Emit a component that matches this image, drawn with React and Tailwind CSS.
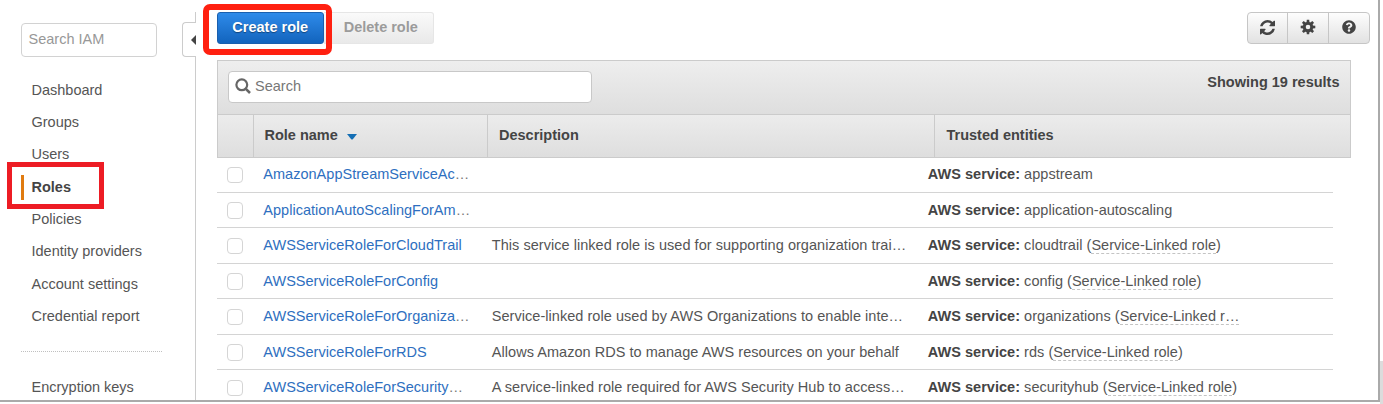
import React from "react";
import { FaQuestionCircle } from "react-icons/fa";

const NAV = [
  "Dashboard",
  "Groups",
  "Users",
  "Roles",
  "Policies",
  "Identity providers",
  "Account settings",
  "Credential report",
];

const ROLES = [
  { name: "AmazonAppStreamServiceAc", cut: true, service: "appstream" },
  { name: "ApplicationAutoScalingForAm", cut: true, service: "application-autoscaling" },
  {
    name: "AWSServiceRoleForCloudTrail",
    description: "This service linked role is used for supporting organization trai…",
    service: "cloudtrail",
    linked: "Service-Linked role",
  },
  { name: "AWSServiceRoleForConfig", service: "config", linked: "Service-Linked role" },
  {
    name: "AWSServiceRoleForOrganiza",
    cut: true,
    description: "Service-linked role used by AWS Organizations to enable inte…",
    service: "organizations",
    linked: "Service-Linked r…",
    linkedCut: true,
  },
  {
    name: "AWSServiceRoleForRDS",
    description: "Allows Amazon RDS to manage AWS resources on your behalf",
    service: "rds",
    linked: "Service-Linked role",
  },
  {
    name: "AWSServiceRoleForSecurity",
    cut: true,
    description: "A service-linked role required for AWS Security Hub to access…",
    service: "securityhub",
    linked: "Service-Linked role",
  },
];

function RefreshIcon() {
  return (
    <svg viewBox="128 128 1536 1536" className="size-[15px]" fill="currentColor">
      <path d="M1639 1056q0 5-1 7-64 268-268 434.5t-478 166.5q-146 0-282.5-55t-243.5-157l-129 129q-19 19-45 19t-45-19-19-45v-448q0-26 19-45t45-19h448q26 0 45 19t19 45-19 45l-137 137q71 66 161 102t187 36q134 0 250-65t186-179q11-17 53-117 8-23 30-23h192q13 0 22.5 9.5t9.5 22.5zm25-800v448q0 26-19 45t-45 19h-448q-26 0-45-19t-19-45 19-45l138-138q-148-137-349-137-134 0-250 65t-186 179q-11 17-53 117-8 23-30 23h-199q-13 0-22.5-9.5t-9.5-22.5v-7q65-268 270-434.5t480-166.5q146 0 284 55.5t245 156.5l130-129q19-19 45-19t45 19 19 45z" />
    </svg>
  );
}

function GearIcon() {
  return (
    <svg viewBox="-8 -8 16 16" className="size-[16px]" fill="currentColor">
      <path
        fillRule="evenodd"
        d="M-5.2 0a5.2 5.2 0 1 0 10.4 0a5.2 5.2 0 1 0-10.4 0zM-2.3 0a2.3 2.3 0 1 1 4.6 0a2.3 2.3 0 1 1-4.6 0z"
      />
      {[0, 45, 90, 135, 180, 225, 270, 315].map((a) => (
        <path key={a} transform={`rotate(${a})`} d="M-1.5-4.5L-1.2-7.3H1.2L1.5-4.5z" />
      ))}
    </svg>
  );
}

function Sidebar() {
  return (
    <div className="flex h-[400px] w-[182px] shrink-0 flex-col pl-[21px] pt-[23px]">
      <div className="flex h-[33.6px] w-[135.5px] shrink-0 items-center rounded-[4px] border-[1.5px] border-[#d2d2d2] pl-[6.5px] pt-[1px] text-[14.5px] text-[#989898]">
        Search IAM
      </div>
      <div className="mt-[17.8px] flex shrink-0 flex-col">
        {NAV.map((item) =>
          item === "Roles" ? (
            <div key={item} className="relative flex h-[32.35px] items-center">
              <span className="h-[25px] w-[3px] bg-[#e07b10]" />
              <span className="pl-[7.5px] font-bold text-[#444]">{item}</span>
              <span className="absolute -left-[14px] -top-[9px] h-[47px] w-[97px] border-[5px] border-[#ed1c24]" />
            </div>
          ) : (
            <div key={item} className="flex h-[32.35px] items-center pl-[10.5px]">
              {item}
            </div>
          )
        )}
      </div>
      <div className="mt-[17.8px] w-[141px] shrink-0 border-t border-dotted border-[#c0c0c0]" />
      <div className="mt-[19.5px] flex h-[32px] shrink-0 items-center pl-[10.5px]">Encryption keys</div>
    </div>
  );
}

function CollapseRail() {
  return (
    <div className="flex h-[400px] w-[14px] shrink-0 flex-col pt-[12px]">
      <div className="h-[10px] border-r border-[#ccc]" />
      <div className="flex h-[35px] items-center justify-end rounded-l-[4px] border border-r-0 border-[#ccc]">
        <svg viewBox="0 0 5 10" className="h-[10px] w-[5px]" fill="#444">
          <path d="M5 0V10L0 5z" />
        </svg>
      </div>
      <div className="flex-1 border-r border-[#ccc]" />
    </div>
  );
}

function Toolbar() {
  return (
    <div className="flex h-[60px] items-start pt-[12px]">
      <div className="relative flex h-[32px] w-[107.5px] items-center justify-center rounded-[3px] border border-[#1a5fae] bg-linear-to-b from-[#2e8bea] to-[#1264bd] text-[14.5px] font-bold text-white [text-shadow:0_1px_1px_rgba(0,0,0,0.4)]">
        Create role
        <span className="absolute -left-[14.5px] -top-[9px] h-[51px] w-[129px] rounded-[7px] border-[6px] border-[#ff2010]" />
      </div>
      <div className="flex h-[32px] w-[109.5px] items-center justify-center rounded-r-[3px] border border-l-0 border-[#e6e6e6] bg-linear-to-b from-[#fafafa] to-[#e9e9e9] pl-[5px] text-[14.5px] font-bold text-[#9b9b9b]">
        Delete role
      </div>
      <div className="ml-auto mr-[8.5px] flex h-[32px] w-[123px] divide-x divide-[#c6c6c6] rounded-[4px] border border-[#c6c6c6] bg-linear-to-b from-[#fdfdfd] to-[#e2e2e2] text-[#444]">
        <div className="flex flex-1 items-center justify-center pb-[2px]"><RefreshIcon /></div>
        <div className="flex flex-1 items-center justify-center pb-[2px]"><GearIcon /></div>
        <div className="flex flex-1 items-center justify-center pb-[2px]"><FaQuestionCircle size={14} /></div>
      </div>
    </div>
  );
}

function RoleRow({ role }) {
  return (
    <div className="flex h-[35.45px] w-[1116.5px] items-center border-b border-[#d4d4d4] pt-[1px]">
      <div className="w-[46.8px] shrink-0 pl-[10px]">
        <div className="size-[16.5px] rounded-[4px] border-[1.5px] border-[#d5d5d5]" />
      </div>
      <div className="w-[228.5px] shrink-0 tracking-[0.02px] text-[#2e6fc0]">
        {role.name}
        {role.cut && <span className="text-[#777]">…</span>}
      </div>
      <div className="w-[436px] shrink-0 tracking-[0.04px]">{role.description}</div>
      <div className="whitespace-nowrap tracking-[0.03px]">
        <b className="text-[#444]">AWS service:</b> {role.service}
        {role.linked && (
          <>
            {" ("}
            <span className="inline-block border-b border-dashed border-[#c4c4c4] leading-[15px]">{role.linked}</span>
            {!role.linkedCut && ")"}
          </>
        )}
      </div>
    </div>
  );
}

function RolesTable() {
  return (
    <div className="flex flex-col">
      <div className="w-[1134px] border border-[#cbcbcb] font-bold text-[#444]">
        <div className="flex h-[52.5px] items-start justify-between bg-linear-to-b from-[#eeeeee] to-[#dedede] pl-[10px] pr-[10px] pt-[10px]">
          <div className="flex h-[32px] w-[364px] items-center rounded-[4px] border border-[#c8c8c8] bg-white pl-[6px] font-normal text-[#777]">
            <svg viewBox="0 0 16 16" className="mb-[3px] mr-[4.5px] size-[16px]" fill="none" stroke="#666" strokeWidth="2.2">
              <circle cx="6.8" cy="6.8" r="5.4" />
              <path d="M10.6 10.6L15 15" strokeWidth="2.6" />
            </svg>
            Search
          </div>
          <div className="leading-[22px]">Showing 19 results</div>
        </div>
        <div className="flex h-[43px] items-stretch border-t border-[#cbcbcb] bg-linear-to-b from-[#ececec] to-[#dedede]">
          <div className="w-[35.5px]" />
          <div className="flex w-[234px] items-center border-l border-[#cbcbcb] pl-[10.5px]">
            Role name
            <svg viewBox="0 0 10 6" className="ml-[9px] mt-[2px] h-[6px] w-[10px]" fill="#146eb4">
              <path d="M0 0H10L6 5Q5 6 4 5z" />
            </svg>
          </div>
          <div className="flex w-[447px] items-center border-l border-[#cbcbcb] pl-[11px]">Description</div>
          <div className="flex flex-1 items-center border-l border-[#cbcbcb] pl-[11.5px]">Trusted entities</div>
        </div>
      </div>
      {ROLES.map((role) => (
        <RoleRow key={role.name} role={role} />
      ))}
    </div>
  );
}

export default function App() {
  return (
    <div className="h-[404px] w-[1383px] overflow-hidden bg-white font-['Liberation_Sans',Arial,sans-serif] text-[14.5px] text-[#555]">
      <div className="flex">
        <div className="flex h-[402px] w-[1380px] overflow-hidden border-b-2 border-r-2 border-b-[#aaa] border-r-[#aaa]">
          <Sidebar />
          <CollapseRail />
          <div className="min-w-0 flex-1 pl-[20.5px]">
            <Toolbar />
            <RolesTable />
          </div>
        </div>
        <div className="flex h-[404px] w-[3px] flex-col justify-end">
          <div className="h-[43px] bg-[#dcdcdc]" />
        </div>
      </div>
    </div>
  );
}
